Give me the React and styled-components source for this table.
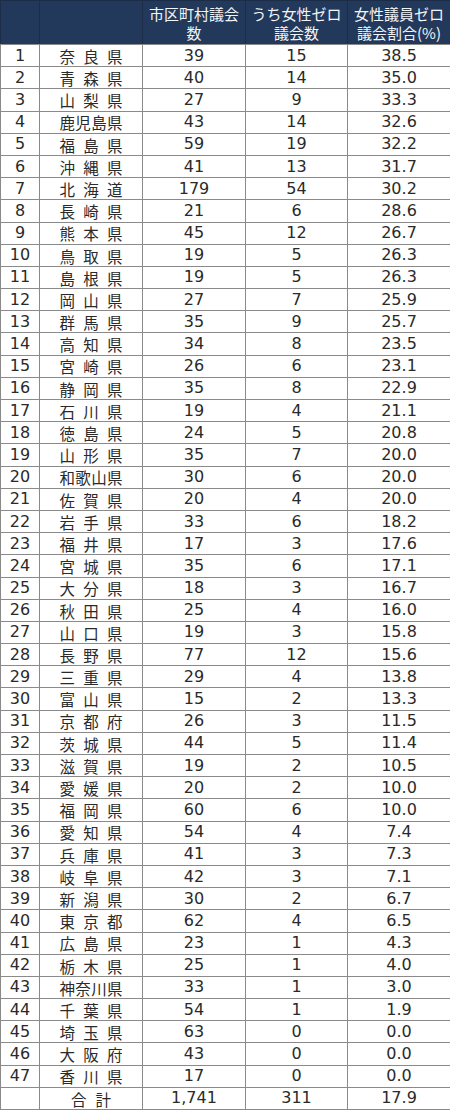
import React from "react";
import styled, { createGlobalStyle } from "styled-components";

const GlobalStyle = createGlobalStyle`
  html, body {
    margin: 0;
    padding: 0;
    background: #ffffff;
  }
  body {
    font-family: "DejaVu Sans", "Noto Sans CJK JP", sans-serif;
    color: #2a2a2a;
  }
`;

const Table = styled.table`
  width: 450px;
  table-layout: fixed;
  border-collapse: collapse;
`;

const HeadCell = styled.th`
  height: 43px;
  padding: 0 2px;
  background: #22395b;
  color: #f2f4f7;
  font-family: "Noto Sans CJK JP", sans-serif;
  font-weight: 400;
  font-size: 15px;
  line-height: 19px;
  text-align: center;
  border: 1px solid #1b2d47;
  border-bottom-color: #8a8a8a;
`;

const Row = styled.tr`
  height: 22.2px;
`;

const Cell = styled.td`
  padding: 0;
  border: 1px solid #8a8a8a;
  text-align: center;
  font-size: 16px;
  line-height: 20px;
  white-space: nowrap;
`;

const Spread = styled.span`
  display: inline-flex;
  justify-content: space-between;
  width: ${(p) => p.$width}px;
  font-family: "Noto Sans CJK JP", sans-serif;
  font-size: 15.5px;
  vertical-align: middle;
`;

const rows = [
  ["奈良県", "39", "15", "38.5"],
  ["青森県", "40", "14", "35.0"],
  ["山梨県", "27", "9", "33.3"],
  ["鹿児島県", "43", "14", "32.6"],
  ["福島県", "59", "19", "32.2"],
  ["沖縄県", "41", "13", "31.7"],
  ["北海道", "179", "54", "30.2"],
  ["長崎県", "21", "6", "28.6"],
  ["熊本県", "45", "12", "26.7"],
  ["鳥取県", "19", "5", "26.3"],
  ["島根県", "19", "5", "26.3"],
  ["岡山県", "27", "7", "25.9"],
  ["群馬県", "35", "9", "25.7"],
  ["高知県", "34", "8", "23.5"],
  ["宮崎県", "26", "6", "23.1"],
  ["静岡県", "35", "8", "22.9"],
  ["石川県", "19", "4", "21.1"],
  ["徳島県", "24", "5", "20.8"],
  ["山形県", "35", "7", "20.0"],
  ["和歌山県", "30", "6", "20.0"],
  ["佐賀県", "20", "4", "20.0"],
  ["岩手県", "33", "6", "18.2"],
  ["福井県", "17", "3", "17.6"],
  ["宮城県", "35", "6", "17.1"],
  ["大分県", "18", "3", "16.7"],
  ["秋田県", "25", "4", "16.0"],
  ["山口県", "19", "3", "15.8"],
  ["長野県", "77", "12", "15.6"],
  ["三重県", "29", "4", "13.8"],
  ["富山県", "15", "2", "13.3"],
  ["京都府", "26", "3", "11.5"],
  ["茨城県", "44", "5", "11.4"],
  ["滋賀県", "19", "2", "10.5"],
  ["愛媛県", "20", "2", "10.0"],
  ["福岡県", "60", "6", "10.0"],
  ["愛知県", "54", "4", "7.4"],
  ["兵庫県", "41", "3", "7.3"],
  ["岐阜県", "42", "3", "7.1"],
  ["新潟県", "30", "2", "6.7"],
  ["東京都", "62", "4", "6.5"],
  ["広島県", "23", "1", "4.3"],
  ["栃木県", "25", "1", "4.0"],
  ["神奈川県", "33", "1", "3.0"],
  ["千葉県", "54", "1", "1.9"],
  ["埼玉県", "63", "0", "0.0"],
  ["大阪府", "43", "0", "0.0"],
  ["香川県", "17", "0", "0.0"],
];

const Name = ({ text, width = 63 }) => (
  <Spread $width={width}>
    {[...text].map((ch, i) => (
      <span key={i}>{ch}</span>
    ))}
  </Spread>
);

export default function App() {
  return (
    <>
      <GlobalStyle />
      <Table>
        <colgroup>
          <col style={{ width: 39 }} />
          <col style={{ width: 103 }} />
          <col style={{ width: 103 }} />
          <col style={{ width: 102 }} />
          <col style={{ width: 103 }} />
        </colgroup>
        <thead>
          <tr>
            <HeadCell />
            <HeadCell />
            <HeadCell>市区町村議会<br />数</HeadCell>
            <HeadCell>うち女性ゼロ<br />議会数</HeadCell>
            <HeadCell>女性議員ゼロ<br />議会割合(%)</HeadCell>
          </tr>
        </thead>
        <tbody>
          {rows.map(([name, councils, zero, ratio], i) => (
            <Row key={name}>
              <Cell>{i + 1}</Cell>
              <Cell><Name text={name} /></Cell>
              <Cell>{councils}</Cell>
              <Cell>{zero}</Cell>
              <Cell>{ratio}</Cell>
            </Row>
          ))}
          <Row>
            <Cell />
            <Cell><Name text="合計" width={40} /></Cell>
            <Cell>1,741</Cell>
            <Cell>311</Cell>
            <Cell>17.9</Cell>
          </Row>
        </tbody>
      </Table>
    </>
  );
}
